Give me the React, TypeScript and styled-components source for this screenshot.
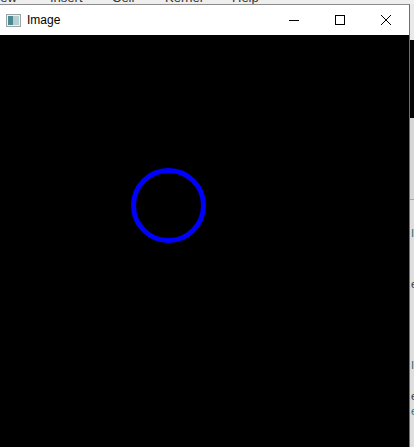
import styled, { createGlobalStyle } from 'styled-components';

const GlobalStyle = createGlobalStyle`
  body {
    margin: 0;
    background: #eeeeee;
    font-family: 'Liberation Sans', Arial, sans-serif;
  }
`;

// menu entries of the notebook behind the window, each with its slot width
const menuItems = [
  { label: 'View', width: 61 },
  { label: 'Insert', width: 62 },
  { label: 'Cell', width: 53 },
  { label: 'Kernel', width: 67 },
  { label: 'Help', width: 60 },
];

// fragments of the notebook that peek out on the right of the window
const noteLines = [
  { top: 28, text: 'I', color: '#2f6f6f' },
  { top: 40, text: 'e', color: '#333' },
  { top: 70, text: 'I', color: '#2f6f6f' },
  { top: 20, text: 'e', color: '#333' },
  { top: 4, text: 'e', color: '#2f6f6f' },
];

export default function App() {
  return (
    <>
      <GlobalStyle />
      <Desktop>
        <Notebook>
          <MenuBar>
            {menuItems.map((item) => (
              <MenuItem key={item.label} $width={item.width}>
                {item.label}
              </MenuItem>
            ))}
          </MenuBar>
          <Band $height={36} $color="#e9e9e9" />
          <Band $height={78} $color="#050505" />
          <Band $height={81} $color="#d6d6d6" />
          <Divider />
          <Cells>
            {noteLines.map((line, i) => (
              <CellText key={i} $top={line.top} $color={line.color}>
                {line.text}
              </CellText>
            ))}
          </Cells>
        </Notebook>

        <Window>
          <TitleBar>
            <AppIcon />
            <Title>Image</Title>
            <Controls>
              <ControlButton aria-label="minimize">
                <svg width="10" height="10" viewBox="0 0 10 10">
                  <path d="M0 5.5h10" stroke="#000" strokeWidth="1" />
                </svg>
              </ControlButton>
              <ControlButton aria-label="maximize">
                <svg width="10" height="10" viewBox="0 0 10 10">
                  <rect x="0.5" y="0.5" width="9" height="9" fill="none" stroke="#000" strokeWidth="1" />
                </svg>
              </ControlButton>
              <ControlButton aria-label="close">
                <svg width="10" height="10" viewBox="0 0 10 10">
                  <path d="M0 0L10 10M10 0L0 10" stroke="#000" strokeWidth="1" />
                </svg>
              </ControlButton>
            </Controls>
          </TitleBar>
          <Canvas>
            <svg width="409" height="412" viewBox="0 0 409 412">
              <circle cx="168.5" cy="170.5" r="35" fill="none" stroke="#0000ff" strokeWidth="5" />
            </svg>
          </Canvas>
        </Window>
      </Desktop>
    </>
  );
}

function AppIcon() {
  return (
    <IconBox>
      <svg width="15" height="13" viewBox="0 0 15 13">
        <rect x="0.5" y="0.5" width="14" height="12" fill="#eef1f1" stroke="#9aa6a8" />
        <rect x="2" y="2" width="5" height="9" fill="#4b8a90" />
        <rect x="7" y="2" width="6" height="9" fill="#b7cfd1" />
      </svg>
    </IconBox>
  );
}

const Desktop = styled.div`
  position: relative;
  width: 414px;
  height: 447px;
  overflow: hidden;
`;

const Notebook = styled.div`
  display: flex;
  flex-direction: column;
  height: 100%;
`;

const MenuBar = styled.div`
  display: flex;
  height: 4px;
  margin-left: -11px;
  overflow: hidden;
  background: #eeeeee;
`;

const MenuItem = styled.span<{ $width: number }>`
  flex: 0 0 ${(p) => p.$width}px;
  font-size: 13px;
  line-height: 13px;
  margin-top: -9px;
  color: #333;
  white-space: nowrap;
`;

const Band = styled.div<{ $height: number; $color: string }>`
  height: ${(p) => p.$height}px;
  background: ${(p) => p.$color};
`;

const Divider = styled.div`
  height: 1px;
  background: #a8a8a8;
`;

const Cells = styled.div`
  flex: 1;
  display: flex;
  flex-direction: column;
  align-items: flex-end;
  background: #dedede;
`;

const CellText = styled.span<{ $top: number; $color: string }>`
  margin-top: ${(p) => p.$top}px;
  width: 3px;
  overflow: hidden;
  font-size: 11px;
  line-height: 11px;
  color: ${(p) => p.$color};
`;

const Window = styled.div`
  position: absolute;
  left: 0;
  top: 4px;
  width: 409px;
  height: 447px;
  display: flex;
  flex-direction: column;
  border-top: 1px solid #8c8c8c;
  border-right: 1px solid #6e6e6e;
  background: #ffffff;
`;

const TitleBar = styled.div`
  display: flex;
  align-items: center;
  height: 30px;
  background: #ffffff;
  flex-shrink: 0;
`;

const IconBox = styled.div`
  display: flex;
  margin-left: 6px;
  margin-right: 6px;
`;

const Title = styled.span`
  flex: 1;
  font-size: 12px;
  color: #000;
`;

const Controls = styled.div`
  display: flex;
  height: 100%;
`;

const ControlButton = styled.div`
  width: 46px;
  height: 100%;
  display: flex;
  align-items: center;
  justify-content: center;
`;

const Canvas = styled.div`
  flex: 1;
  background: #000;
  overflow: hidden;
  display: flex;
`;
